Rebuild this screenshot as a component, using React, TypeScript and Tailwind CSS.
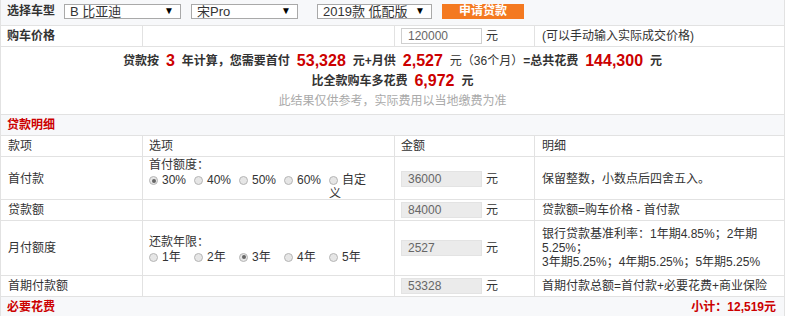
const font = { fontFamily: '"Liberation Sans", "Noto Sans CJK SC", sans-serif' }

function Select({ label, width }: { label: string; width: string }) {
  return (
    <div className={`flex h-[15px] items-center justify-between border border-[#a9a9a9] bg-white pl-[5px] pr-[6px] text-[13px] leading-none text-[#333] ${width}`}>
      <span className="whitespace-nowrap">{label}</span>
      <span className="text-[10px] text-black">▼</span>
    </div>
  )
}

function Radio({ checked }: { checked?: boolean }) {
  return (
    <span className="mr-[4px] inline-flex h-[9px] w-[9px] shrink-0 items-center justify-center rounded-full border border-[#b5b5b5] bg-[#e6e6e6] align-middle">
      {checked && <span className="h-[4px] w-[4px] rounded-full bg-[#666]" />}
    </span>
  )
}

function RadioGroup({ title, options, active }: { title: string; options: string[]; active: number }) {
  return (
    <div className="pl-[6px] text-[12px] leading-[14px] text-[#333]">
      <div>{title}</div>
      <div className="mt-[1px] flex">
        {options.map((o, i) => (
          <label key={o} className="w-[45px] shrink-0">
            <Radio checked={i === active} />
            {o}
          </label>
        ))}
      </div>
    </div>
  )
}

function Amount({ value }: { value: string }) {
  return (
    <div className="flex items-center pl-[6px]">
      <div className="flex h-[16px] w-[81px] items-center border border-[#e3e3e3] bg-[#ebebeb] pl-[6px] text-[12px] text-[#666]">{value}</div>
      <span className="ml-[4px] text-[12px] text-[#333]">元</span>
    </div>
  )
}

const cols = 'grid grid-cols-[141px_252px_140px_1fr] border-b border-[#e2e2e2]'
const cell = 'flex items-center border-l border-[#e2e2e2]'
const num = 'mx-[7px] text-[16px] text-[#cc0000]'

export default function App() {
  return (
    <div className="h-[316px] w-[785px] overflow-hidden bg-white text-[12px] text-[#333]" style={font}>
      <div className="border-x border-[#e2e2e2]">
        {/* car selection */}
        <div className="flex h-[26px] items-center border-b border-[#e2e2e2] bg-[#f7f8fa] pb-[3px]">
          <span className="ml-[6px] w-[57px] font-bold">选择车型</span>
          <Select label="B 比亚迪" width="w-[117px]" />
          <div className="ml-[10px]">
            <Select label="宋Pro" width="w-[107px]" />
          </div>
          <div className="ml-[19px]">
            <Select label="2019款 低配版" width="w-[115px]" />
          </div>
          <button className="ml-[10px] h-[15px] w-[82px] bg-[#f47920] text-[12px] font-bold leading-[15px] text-white">申请贷款</button>
        </div>

        {/* price */}
        <div className={`${cols} h-[21px]`}>
          <div className="flex items-center pl-[6px] font-bold">购车价格</div>
          <div className={cell} />
          <div className={cell}>
            <div className="flex items-center pl-[6px]">
              <div className="flex h-[16px] w-[81px] items-center border border-[#cfcfcf] bg-white pl-[6px] text-[12px] text-[#666]">120000</div>
              <span className="ml-[4px]">元</span>
            </div>
          </div>
          <div className={`${cell} pl-[7px]`}>(可以手动输入实际成交价格)</div>
        </div>

        {/* result */}
        <div className="flex h-[68px] flex-col items-center border-b border-[#e2e2e2] pt-[4px] text-[12px]">
          <div className="flex h-[20px] items-center font-bold">
            贷款按<span className={num}>3</span>年计算，您需要首付
            <span className={num}>53,328</span>元+月供
            <span className={num}>2,527</span>
            <span className="font-normal">元（36个月）</span>=总共花费
            <span className={num}>144,300</span>元
          </div>
          <div className="flex h-[20px] items-center font-bold">
            比全款购车多花费<span className={num}>6,972</span>元
          </div>
          <div className="flex h-[20px] items-center text-[#aaa]">此结果仅供参考，实际费用以当地缴费为准</div>
        </div>

        {/* loan details heading */}
        <div className="flex h-[21px] items-center border-b border-[#e2e2e2] bg-[#f7f8fa] pl-[6px] font-bold text-[#cc0000]">贷款明细</div>

        <div className={`${cols} h-[21px]`}>
          <div className="flex items-center pl-[7px]">款项</div>
          <div className={`${cell} pl-[6px]`}>选项</div>
          <div className={`${cell} pl-[6px]`}>金额</div>
          <div className={`${cell} pl-[7px]`}>明细</div>
        </div>

        <div className={`${cols} h-[43px]`}>
          <div className="flex items-center pl-[7px]">首付款</div>
          <div className="border-l border-[#e2e2e2] pt-[1px]">
            <RadioGroup title="首付额度：" options={['30%', '40%', '50%', '60%', '自定义']} active={0} />
          </div>
          <div className={cell}><Amount value="36000" /></div>
          <div className={`${cell} pl-[7px]`}>保留整数，小数点后四舍五入。</div>
        </div>

        <div className={`${cols} h-[21px]`}>
          <div className="flex items-center pl-[7px]">贷款额</div>
          <div className={cell} />
          <div className={cell}><Amount value="84000" /></div>
          <div className={`${cell} pl-[7px]`}>贷款额=购车价格 - 首付款</div>
        </div>

        <div className={`${cols} h-[55px]`}>
          <div className="flex items-center pl-[7px]">月付额度</div>
          <div className="flex items-center border-l border-[#e2e2e2] pt-[2px]">
            <RadioGroup title="还款年限：" options={['1年', '2年', '3年', '4年', '5年']} active={2} />
          </div>
          <div className={cell}><Amount value="2527" /></div>
          <div className={`${cell} pl-[7px] pr-[20px] leading-[14px]`}>
            <div>
              银行贷款基准利率：1年期4.85%；2年期5.25%；
              <br />
              3年期5.25%；4年期5.25%；5年期5.25%
            </div>
          </div>
        </div>

        <div className={`${cols} h-[21px]`}>
          <div className="flex items-center pl-[7px]">首期付款额</div>
          <div className={cell} />
          <div className={cell}><Amount value="53328" /></div>
          <div className={`${cell} pl-[7px] whitespace-nowrap`}>首期付款总额=首付款+必要花费+商业保险</div>
        </div>

        <div className="flex h-[21px] items-center justify-between border-b border-[#e2e2e2] bg-[#f7f8fa] pl-[6px] pr-[8px] font-bold text-[#cc0000]">
          <span>必要花费</span>
          <span>小计：12,519元</span>
        </div>
      </div>
    </div>
  )
}
